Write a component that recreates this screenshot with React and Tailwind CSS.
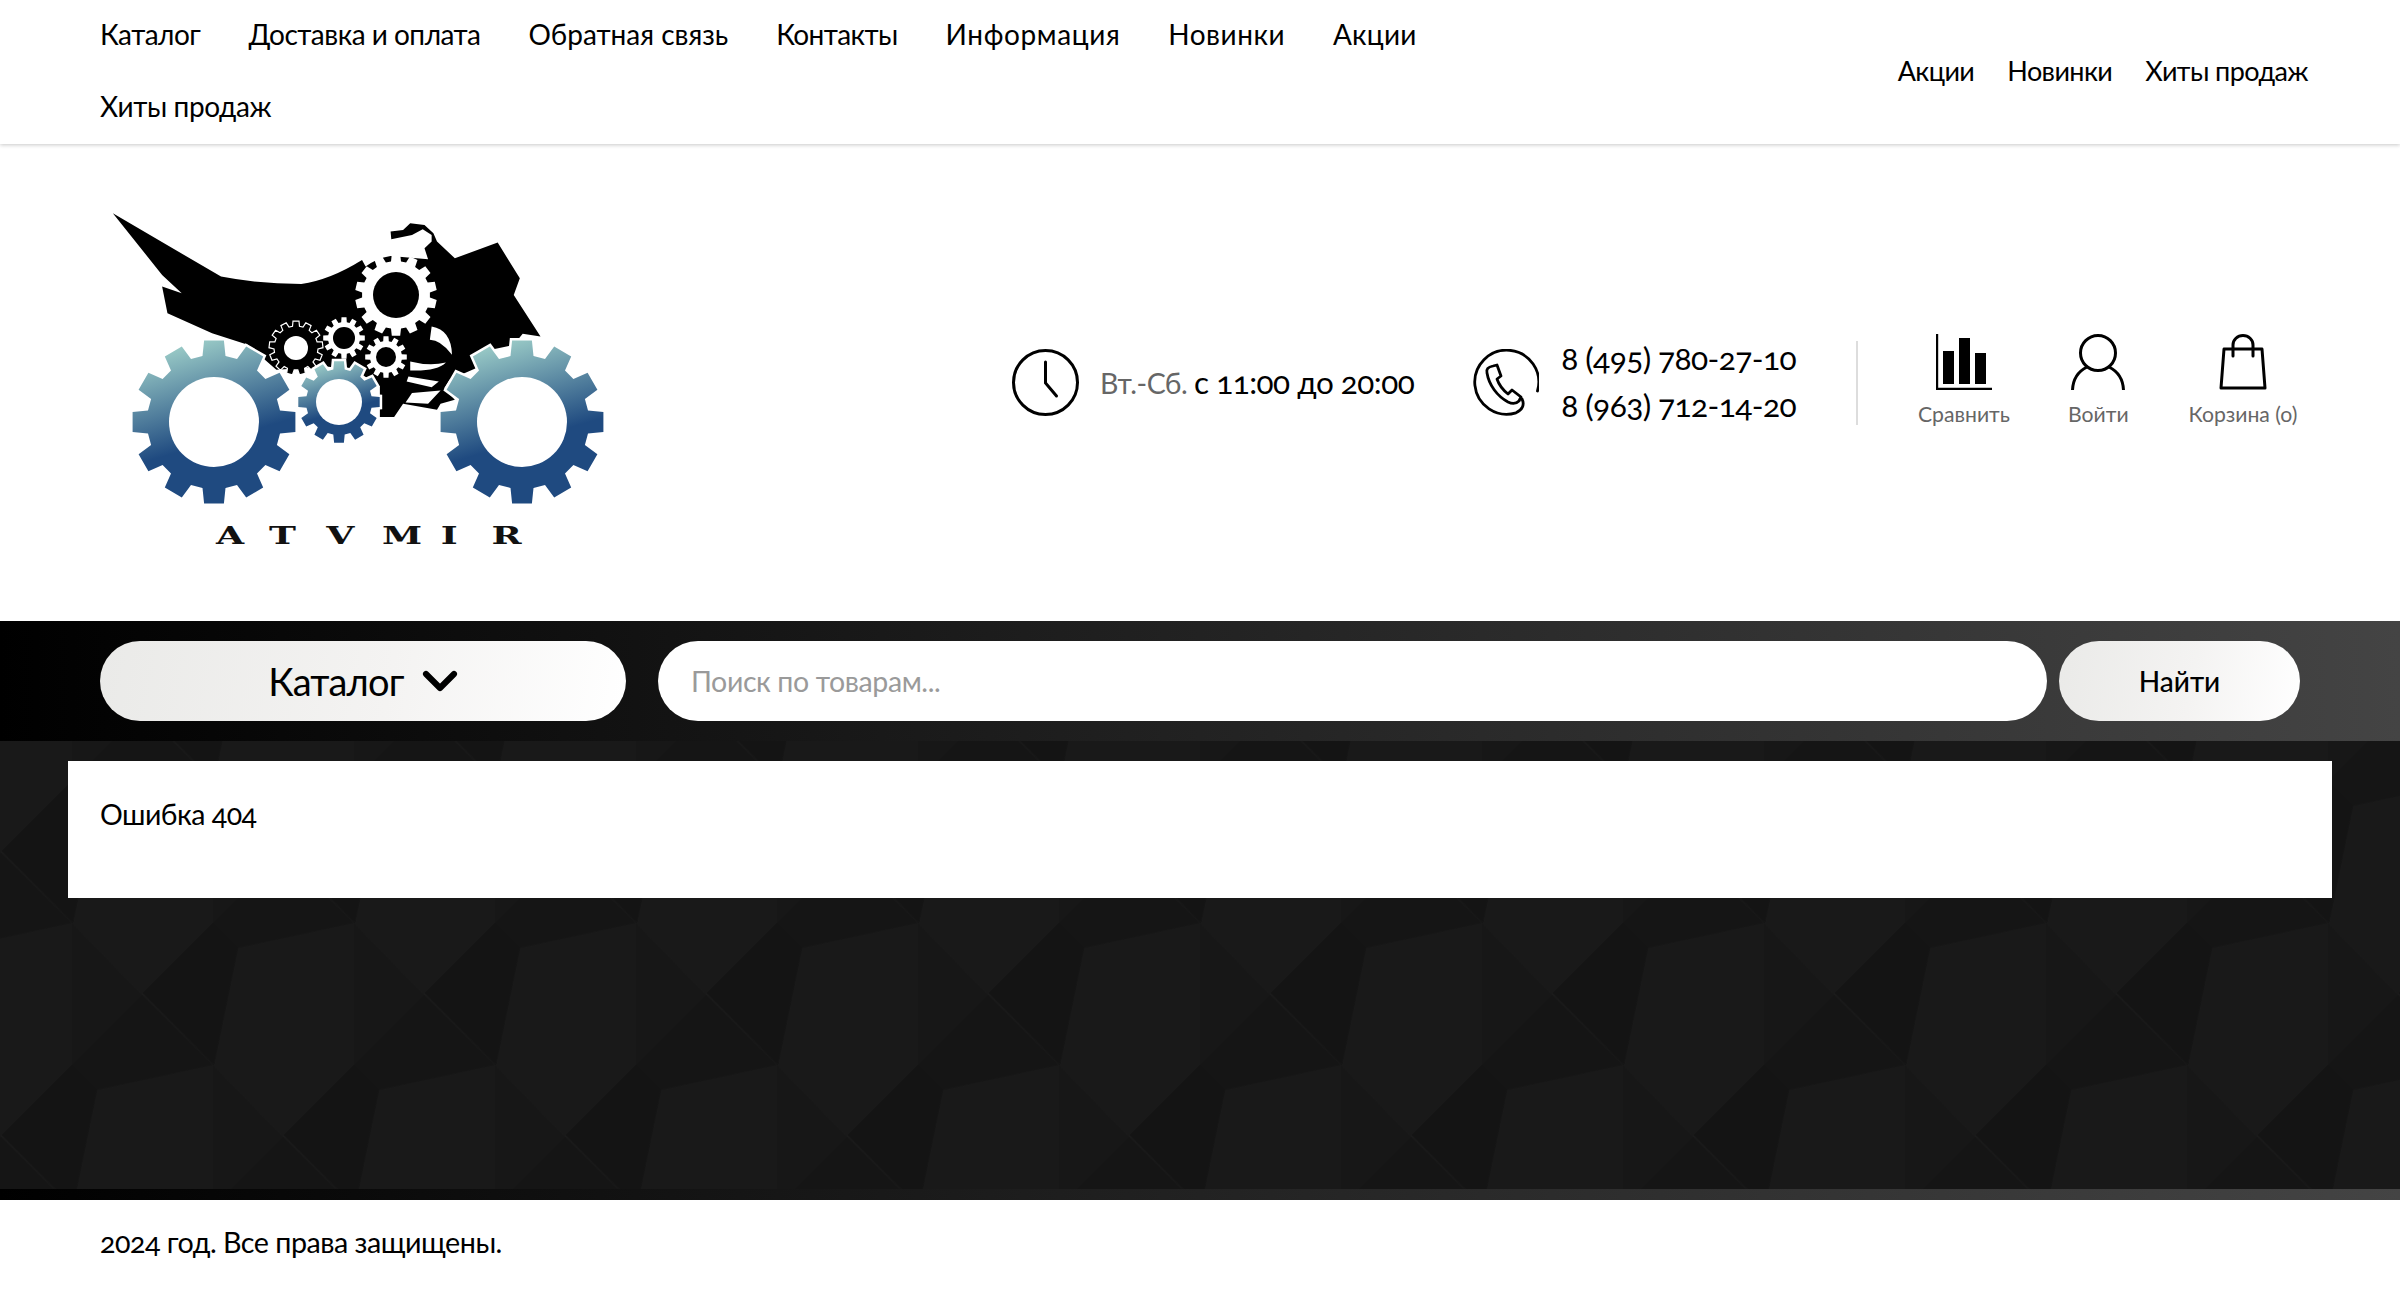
import { ChevronDown } from "lucide-react";

const topLinks = [
  { label: "Каталог", tracking: "tracking-[-0.5px]" },
  { label: "Доставка и оплата", tracking: "tracking-[-0.5px]" },
  { label: "Обратная связь", tracking: "tracking-[0px]" },
  { label: "Контакты", tracking: "tracking-[-0.6px]" },
  { label: "Информация", tracking: "tracking-[0.6px]" },
  { label: "Новинки", tracking: "tracking-[0.5px]" },
  { label: "Акции", tracking: "tracking-[0.2px]" },
  { label: "Хиты продаж", tracking: "tracking-[-0.4px]" },
];
const sideLinks = ["Акции", "Новинки", "Хиты продаж"];

function gearPath(cx, cy, outer, root, teeth) {
  const step = (Math.PI * 2) / teeth;
  let d = "";
  for (let i = 0; i < teeth; i++) {
    const a = i * step - Math.PI / 2;
    const pts = [
      [root, a - step * 0.33],
      [outer, a - step * 0.23],
      [outer, a + step * 0.23],
      [root, a + step * 0.33],
    ];
    pts.forEach(([r, t], n) => {
      const x = (cx + r * Math.cos(t)).toFixed(1);
      const y = (cy + r * Math.sin(t)).toFixed(1);
      d += `${i === 0 && n === 0 ? "M" : "L"}${x} ${y} `;
    });
  }
  return d + "Z";
}

function Logo() {
  return (
    <svg viewBox="100 190 530 380" className="h-[380px] w-[530px]">
      <defs>
        <linearGradient id="gearFill" x1="0.35" y1="0" x2="0.6" y2="0.85">
          <stop offset="0" stopColor="#9ccdc8" />
          <stop offset="0.72" stopColor="#1f4a80" />
          <stop offset="1" stopColor="#1f4a80" />
        </linearGradient>
      </defs>
      <g transform="translate(80 180) scale(0.357 0.333)">
        <path
          fill="#000"
          d="M92 100 L395 290 Q500 312 620 312 Q700 300 790 240 L800 260 Q830 235 870 228 L975 238 L965 205 L985 185 L985 165 L960 148 L930 165 L872 178 L870 155 L905 150 L925 130 L965 135 L990 160 L1000 185 L1050 235 L1170 188 L1232 295 L1215 345 L1290 470 L1240 462 L1215 495 L1105 520 L1120 560 L1035 600 L1020 625 L1050 660 L1010 672 L1000 690 L905 672 L880 712 L840 712 L840 620 L770 570 L690 560 L550 570 L470 495 L370 460 L245 400 L230 320 L285 340 L230 285 Z"
        />
        <path fill="#fff" d="M985 440 Q1040 450 1042 525 Q1010 480 980 480 Z" />
        <path fill="#fff" d="M925 545 Q980 560 1025 548 Q1000 575 925 572 Z" />
        <path fill="#fff" d="M920 590 L1005 605 L985 622 L915 605 Z" />
        <path fill="#fff" d="M930 640 L1010 632 L975 672 L912 668 Z" />
      </g>
      <path d={gearPath(396, 295, 41, 34, 14)} fill="#fff" />
      <circle cx="396" cy="295" r="23" fill="#000" />
      <path d={gearPath(296, 348, 27, 22, 13)} fill="#000" stroke="#fff" strokeWidth="1.2" />
      <circle cx="296" cy="348" r="12" fill="#fff" />
      <path d={gearPath(344, 338, 21, 16, 12)} fill="#fff" />
      <circle cx="344" cy="338" r="11" fill="#000" />
      <path d={gearPath(386, 357, 21, 16, 12)} fill="#fff" />
      <circle cx="386" cy="357" r="10" fill="#000" />
      <path d={gearPath(214, 422, 82, 67, 12)} fill="url(#gearFill)" stroke="#fff" strokeWidth="5" paintOrder="stroke" />
      <circle cx="214" cy="422" r="45" fill="#fff" />
      <path d={gearPath(522, 422, 82, 67, 12)} fill="url(#gearFill)" stroke="#fff" strokeWidth="5" paintOrder="stroke" />
      <circle cx="522" cy="422" r="45" fill="#fff" />
      <path d={gearPath(339, 402, 41, 33, 12)} fill="url(#gearFill)" stroke="#fff" strokeWidth="5" paintOrder="stroke" />
      <circle cx="339" cy="402" r="23" fill="#fff" />
      <text
        transform="scale(1.45 1)"
        x="149 185.5 225 263.5 304 339"
        y="544"
        fontFamily="'DejaVu Serif', serif"
        fontWeight="700"
        fontSize="25"
        fill="#111"
      >
        ATVMIR
      </text>
    </svg>
  );
}

function ClockIcon() {
  return (
    <svg viewBox="0 0 67 67" className="h-[67px] w-[67px] shrink-0" fill="none" stroke="#000" strokeWidth="3" strokeLinecap="round">
      <circle cx="33.5" cy="33.5" r="32" />
      <path d="M33.5 13 V34 L44.5 47" />
    </svg>
  );
}

function PhoneIcon() {
  return (
    <svg viewBox="0 0 67 67" className="h-[67px] w-[67px] shrink-0" fill="none" stroke="#000" strokeWidth="2.8" strokeLinecap="round" strokeLinejoin="round">
      <path d="M65.5 42 A32 32 0 1 0 44 63.8 C50 61 53 56 50 50" />
      <path d="M15 24 C14 20 16 18 21 17 L25 16 L29 27 L25 30 C27 36 31 41 36 45 L40 41 L49 48 L47 52 C44 55 40 55 36 53 C25 47 17 36 15 24 Z" />
    </svg>
  );
}

function ChartIcon() {
  return (
    <svg viewBox="0 0 56 56" className="h-14 w-14">
      <path d="M1 0 V55 H56" fill="none" stroke="#000" strokeWidth="2.4" />
      <rect x="7" y="17" width="11" height="33" fill="#000" />
      <rect x="23" y="4" width="11" height="46" fill="#000" />
      <rect x="39" y="19" width="11" height="31" fill="#000" />
    </svg>
  );
}

function UserIcon() {
  return (
    <svg viewBox="0 0 54 56" className="h-14 w-[54px]" fill="none" stroke="#000" strokeWidth="3">
      <circle cx="27" cy="19" r="17.5" />
      <path d="M1.5 56 C2 45 8 37 16 33 M52.5 56 C52 45 46 37 38 33" />
    </svg>
  );
}

function BagIcon() {
  return (
    <svg viewBox="0 0 48 56" className="h-14 w-12" fill="none" stroke="#000" strokeWidth="3" strokeLinejoin="round" strokeLinecap="round">
      <path d="M5 15 H43 L46 54 H2 Z" />
      <path d="M14 22 V11 a10 9.5 0 0 1 20 0 V22" />
    </svg>
  );
}

function HeaderAction({ icon, label, className }) {
  return (
    <a className={`flex flex-col items-center ${className}`}>
      {icon}
      <span className="mt-[7px] text-[21.2px] leading-[34px] text-[#666]">{label}</span>
    </a>
  );
}

function Backdrop() {
  const cells = [];
  for (let i = 0; i < 5; i++) {
    for (let j = -1; j < 4; j++) {
      if ((i + j) % 2 === 0) cells.push([i * 141, j * 142]);
    }
  }
  return (
    <svg className="absolute inset-0 h-full w-full" aria-hidden="true">
      <defs>
        <pattern id="facets" width="282" height="284" patternUnits="userSpaceOnUse" patternTransform="translate(213 40)">
          <rect width="282" height="284" fill="#191919" />
          {cells.map(([x, y]) => (
            <g key={`${x}-${y}`} transform={`translate(${x} ${y})`}>
              <polygon points="-141,-142 -71,-70 -141,0" fill="#171717" stroke="#171717" strokeWidth="0.6" />
              <polygon points="0,0 -71,-70 -141,0 -116,25" fill="#151515" stroke="#151515" strokeWidth="0.6" />
              <polygon points="-141,0 -116,25 -140,142 -211,70" fill="#141414" stroke="#141414" strokeWidth="0.6" />
            </g>
          ))}
        </pattern>
      </defs>
      <rect width="100%" height="100%" fill="url(#facets)" />
    </svg>
  );
}

const btnFill = "bg-[linear-gradient(100deg,#eaeae8,#f4f3f2_55%,#fff)]";

export default function App() {
  return (
    <div className="min-h-screen bg-white font-[Lato,'Noto_Sans',sans-serif] text-black [font-feature-settings:'onum']">
      <div className="relative z-10 flex h-[144px] items-start bg-white pl-[100px] pr-[92px] shadow-[0_1px_4px_rgba(0,0,0,0.22)]">
        <nav className="-mt-[2px] flex w-[1340px] flex-wrap gap-x-[48px] text-[28px] leading-[72px]">
          {topLinks.map((link) => (
            <a key={link.label} className={link.tracking}>
              {link.label}
            </a>
          ))}
        </nav>
        <nav className="ml-auto flex h-full items-center gap-x-[33px] pb-[1px] text-[27px] tracking-[-0.6px]">
          {sideLinks.map((link) => (
            <a key={link}>{link}</a>
          ))}
        </nav>
      </div>

      <header className="flex h-[477px] items-start pl-[100px]">
        <div className="mt-[46px]">
          <Logo />
        </div>
        <div className="ml-[382px] mt-[205px] flex items-center">
          <ClockIcon />
          <p className="ml-[21px] whitespace-nowrap text-[28.5px] tracking-[-0.45px] text-[#666]">
            Вт.-Сб. <span className="text-[31.5px] tracking-[-0.5px] text-black">с 11:00 до 20:00</span>
          </p>
        </div>
        <div className="ml-[58px] mt-[191px] flex items-center">
          <PhoneIcon />
          <div className="ml-[22px] text-[31.7px] leading-[47px] tracking-[-0.6px]">
            <p>8 (495) 780-27-10</p>
            <p>8 (963) 712-14-20</p>
          </div>
        </div>
        <div className="ml-[60px] mt-[197px] h-[84px] w-[2px] bg-[#ddd]" />
        <div className="mt-[190px] flex items-start">
          <HeaderAction icon={<ChartIcon />} label="Сравнить" className="ml-[60px]" />
          <HeaderAction icon={<UserIcon />} label="Войти" className="ml-[58px]" />
          <HeaderAction icon={<BagIcon />} label="Корзина (о)" className="ml-[60px]" />
        </div>
      </header>

      <div className="flex h-[120px] items-center bg-[linear-gradient(90deg,#000,#444)] pl-[100px] pr-[100px]">
        <button className={`flex h-[80px] w-[526px] items-center justify-center rounded-[40px] pl-[10px] text-[38px] tracking-[-0.8px] ${btnFill}`}>
          Каталог
          <ChevronDown className="ml-[8px] h-[56px] w-[56px]" strokeWidth={2.6} />
        </button>
        <input
          placeholder="Поиск по товарам..."
          className="ml-[32px] h-[80px] w-[1389px] rounded-[40px] bg-white px-[33px] text-[28.5px] tracking-[-0.4px] outline-none placeholder:text-[#9a9a9a]"
        />
        <button className={`ml-[12px] h-[80px] w-[241px] rounded-[40px] text-[28px] font-medium ${btnFill}`}>Найти</button>
      </div>

      <main className="relative h-[448px] px-[68px] pt-[20px]">
        <Backdrop />
        <div className="relative h-[137px] bg-white px-[32px] pt-[33px] text-[28.5px] leading-[40px] tracking-[-0.5px]">
          Ошибка 404
        </div>
      </main>

      <footer>
        <div className="h-[11px] bg-[linear-gradient(90deg,#000,#444)]" />
        <p className="h-[98px] pl-[100px] pt-[21px] text-[28.7px] leading-[42px] tracking-[-0.5px]">2024 год. Все права защищены.</p>
      </footer>
    </div>
  );
}
